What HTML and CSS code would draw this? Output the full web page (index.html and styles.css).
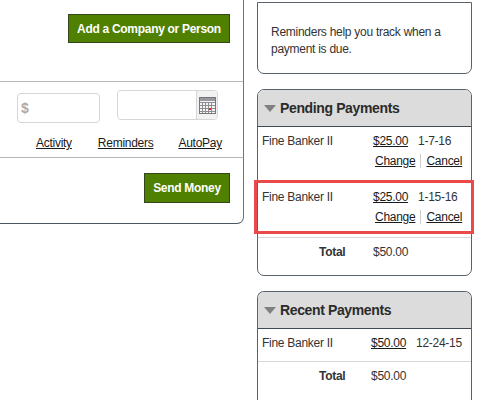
FILE: index.html
```html
<!DOCTYPE html>
<html lang="en">
<head>
    <meta charset="UTF-8">
    <title>Pay Bills</title>
    <link rel="stylesheet" href="styles.css">
</head>
<body>

    <div class="page">
        <div class="main-panel">
            <div class="add-section">
                <button class="green-btn add-btn">Add a Company or Person</button>
            </div>

            <div class="payment-section">
                <div class="fields">
                    <input class="amount-input" type="text" placeholder="$">
                    <div class="date-field">
                        <input class="date-input" type="text">
                        <span class="calendar-btn">
                            <svg width="17" height="17" viewBox="0 0 17 17">
                                <rect x="0.5" y="0.5" width="16" height="16" fill="#f6f6f6" stroke="#77757a"/>
                                <rect x="1" y="1" width="15" height="3" fill="#9a989d"/>
                                <path d="M1 5.5h15M1 8.5h15M1 11.5h15M1 14.5h15M3.5 5v11M6.5 5v11M9.5 5v11M12.5 5v11" stroke="#8f8d92" fill="none"/>
                                <rect x="10" y="11" width="2" height="2" fill="#e8232a"/>
                            </svg>
                        </span>
                    </div>
                </div>
                <div class="links">
                    <a href="#">Activity</a>
                    <a href="#">Reminders</a>
                    <a href="#">AutoPay</a>
                </div>
            </div>

            <div class="send-section">
                <button class="green-btn send-btn">Send Money</button>
            </div>
        </div>

        <div class="side-column">
            <div class="card reminder-card">
                <p>Reminders help you track when a payment is due.</p>
            </div>

            <div class="card">
                <h2 class="card-title"><span class="arrow"></span>Pending Payments</h2>
                <div class="pay-row">
                    <div class="pay-line">
                        <span class="payee">Fine Banker II</span>
                        <a class="amount" href="#">$25.00</a>
                        <span>1-7-16</span>
                    </div>
                    <div class="pay-actions">
                        <a href="#">Change</a><span class="sep"></span><a href="#">Cancel</a>
                    </div>
                </div>
                <div class="pay-row highlighted">
                    <div class="pay-line">
                        <span class="payee">Fine Banker II</span>
                        <a class="amount" href="#">$25.00</a>
                        <span>1-15-16</span>
                    </div>
                    <div class="pay-actions">
                        <a href="#">Change</a><span class="sep"></span><a href="#">Cancel</a>
                    </div>
                </div>
                <div class="total-row">
                    <span class="total-label">Total</span>
                    <span>$50.00</span>
                </div>
            </div>

            <div class="card recent-card">
                <h2 class="card-title"><span class="arrow"></span>Recent Payments</h2>
                <div class="pay-row recent-row">
                    <div class="pay-line">
                        <span class="payee">Fine Banker II</span>
                        <a class="amount recent-amount" href="#">$50.00</a>
                        <span>12-24-15</span>
                    </div>
                </div>
                <div class="total-row recent-total">
                    <span class="total-label">Total</span>
                    <span>$50.00</span>
                </div>
            </div>
        </div>
    </div>

</body>
</html>
```

FILE: styles.css
```css
html, body {
    margin: 0;
    height: 400px;
    overflow: hidden;
    background: #fff;
}

body {
    font-family: "Liberation Sans", Arial, sans-serif;
    font-size: 12px;
    letter-spacing: -0.27px;
    color: #333;
}

a {
    color: #1a1a1a;
}

.page {
    display: flex;
    align-items: flex-start;
    gap: 13px;
}

/* left panel, cut off by the window on top and left */
.main-panel {
    width: 244px;
    height: 224px;
    box-sizing: border-box;
    border-right: 1px solid #6d7580;
    border-bottom: 1px solid #4c5560;
    border-bottom-right-radius: 7px;
    flex-shrink: 0;
}

.add-section {
    height: 82px;
    box-sizing: border-box;
    padding: 14px 13px 0 0;
    display: flex;
    justify-content: flex-end;
    align-items: flex-start;
    border-bottom: 1px solid #b4b6b9;
}

.green-btn {
    font-family: "Liberation Sans", Arial, sans-serif;
    font-size: 12px;
    font-weight: bold;
    letter-spacing: -0.3px;
    color: #fff;
    background: #4f8000;
    border: 1px solid #36451f;
    padding: 0;
}

.add-btn {
    width: 162px;
    height: 29px;
}

.send-btn {
    width: 86px;
    height: 30px;
}

.payment-section {
    height: 76px;
    box-sizing: border-box;
    border-bottom: 1px solid #b4b6b9;
    padding-top: 8px;
}

.fields {
    display: flex;
    align-items: flex-start;
    padding-left: 17px;
    gap: 17px;
}

.amount-input {
    width: 83px;
    height: 30px;
    box-sizing: border-box;
    margin-top: 3px;
    border: 1px solid #d6d6d6;
    border-radius: 4px;
    padding: 0 3px;
    font-family: "Liberation Sans", Arial, sans-serif;
    font-size: 14px;
    font-weight: bold;
}

.amount-input::placeholder {
    color: #aaa;
}

.date-field {
    display: flex;
    width: 101px;
    height: 30px;
    box-sizing: border-box;
    border: 1px solid #d6d6d6;
    border-radius: 4px;
}

.date-input {
    width: 78px;
    border: 0;
    border-right: 1px solid #d6d6d6;
    padding: 0;
    background: #fff;
    border-radius: 4px 0 0 4px;
}

.calendar-btn {
    flex: 1;
    display: flex;
    align-items: center;
    justify-content: center;
    background: #f2f2f2;
    border-radius: 0 4px 4px 0;
}

.links {
    display: flex;
    margin-top: 13px;
    padding-left: 36px;
}

.links a:nth-child(1) {
    margin-right: 26px;
}

.links a:nth-child(2) {
    margin-right: 25px;
}

.send-section {
    display: flex;
    justify-content: flex-end;
    padding: 15px 13px 0 0;
}

/* right column */
.side-column {
    width: 215px;
    flex-shrink: 0;
    display: flex;
    flex-direction: column;
    gap: 15px;
}

.card {
    border: 1px solid #59626d;
    border-radius: 7px;
    background: #fff;
}

.reminder-card {
    height: 72px;
    box-sizing: border-box;
    margin-top: 2px;
    border-radius: 0 0 7px 7px;
}

.reminder-card p {
    margin: 21px 13px 0 13px;
    line-height: 17px;
}

.card-title {
    margin: 0;
    height: 36px;
    display: flex;
    align-items: center;
    gap: 4px;
    padding-left: 6px;
    font-size: 14px;
    letter-spacing: -0.37px;
    color: #2b2b2b;
    background: #dcdcdc;
    border-bottom: 1px solid #3f4a55;
    border-radius: 6px 6px 0 0;
}

.arrow {
    width: 0;
    height: 0;
    border-left: 6px solid transparent;
    border-right: 6px solid transparent;
    border-top: 7px solid #808080;
}

.pay-row {
    height: 54px;
    box-sizing: border-box;
    padding: 5px 5px 0 4px;
}

.pay-line {
    display: flex;
    height: 17px;
    align-items: center;
}

.payee {
    width: 111px;
}

.amount {
    width: 45px;
}

.pay-actions {
    display: flex;
    align-items: center;
    margin-top: 5px;
    padding-left: 113px;
}

.sep {
    width: 1px;
    height: 14px;
    margin: 0 5px;
    background: #ccc;
}

.highlighted {
    position: relative;
    height: 53px;
    padding-top: 7px;
}

.highlighted::after {
    content: "";
    position: absolute;
    top: -1px;
    left: -4px;
    right: -3px;
    bottom: 0;
    border: 3px solid #ea4a4a;
}

.total-row {
    display: flex;
    align-items: center;
    height: 38px;
    box-sizing: border-box;
    border-top: 1px solid #d8d8d8;
    margin-top: 3px;
    padding-left: 61px;
    padding-bottom: 10px;
}

.total-label {
    width: 54px;
    font-weight: bold;
}

/* cut off by the bottom of the window, so no bottom border */
.recent-card {
    border-bottom: 0;
    border-radius: 7px 7px 0 0;
    padding-bottom: 1px;
}

.recent-row {
    height: 32px;
}

.recent-amount {
    margin-left: -2px;
}

.recent-total {
    margin-top: 0;
}

.recent-total .total-label {
    width: 52px;
}
```
